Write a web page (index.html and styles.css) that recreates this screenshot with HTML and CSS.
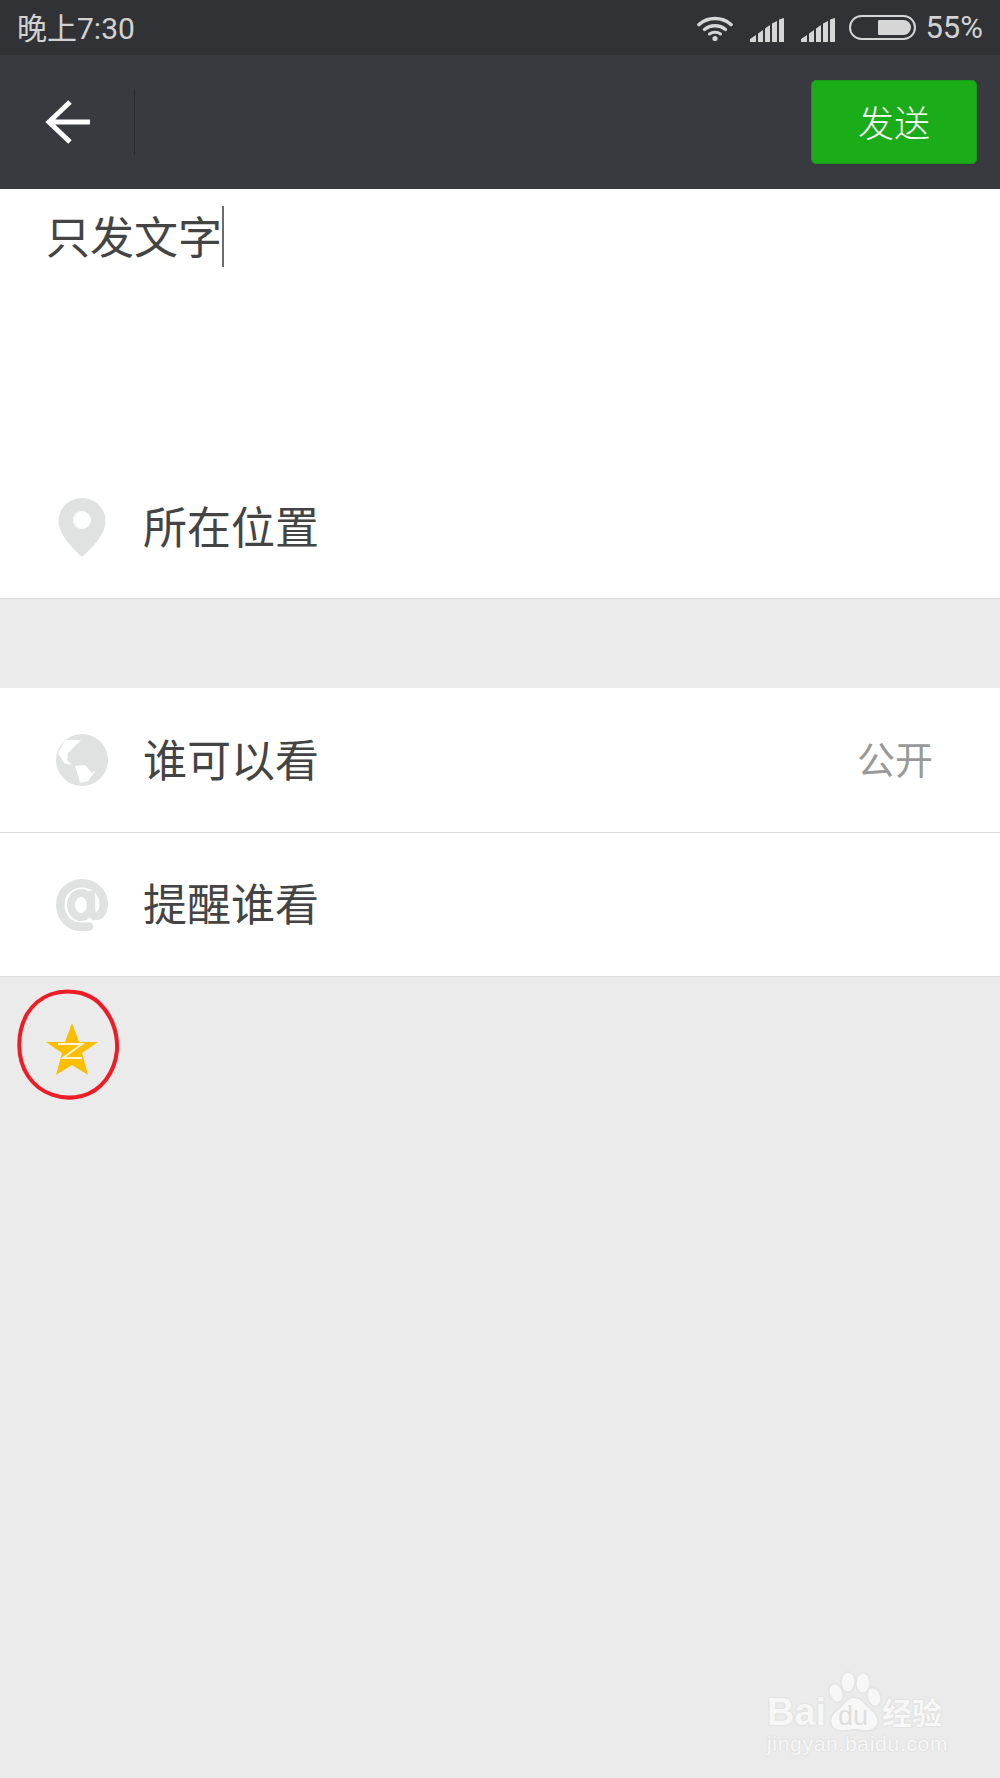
FILE: index.html
```html
<!DOCTYPE html>
<html lang="zh-CN">
<head>
  <meta charset="UTF-8">
  <title>只发文字</title>
  <link rel="stylesheet" href="styles.css">
</head>
<body>
  <div class="status-bar">
    <span class="status-time">晚上7:30</span>
    <div class="status-icons">
      <svg class="icon-wifi" width="36" height="26" viewBox="0 0 36 26">
        <path d="M2 9.500C11 1.500 25 1.500 34 9.500" fill="none" stroke="#d6d6d6" stroke-width="3.600" stroke-linecap="round"/>
        <path d="M7.500 14.500C13.500 9.500 22.500 9.500 28.500 14.500" fill="none" stroke="#d6d6d6" stroke-width="3.400" stroke-linecap="round"/>
        <path d="M12.500 19C15.500 16.800 20.500 16.800 23.500 19" fill="none" stroke="#d6d6d6" stroke-width="3" stroke-linecap="round"/>
        <circle cx="18" cy="23.500" r="2.600" fill="#d6d6d6"/>
      </svg>
      <svg class="icon-signal" width="35" height="24" viewBox="0 0 35 24">
        <path d="M0 24V21L6 17V24ZM8 24V15.500L13 12V24ZM15 24V10.500L20 7V24ZM22 24V5.500L27 3V24ZM29 24V1.500L34 0V24Z" fill="#d6d6d6"/>
      </svg>
      <svg class="icon-signal" width="35" height="24" viewBox="0 0 35 24">
        <path d="M0 24V21L6 17V24ZM8 24V15.500L13 12V24ZM15 24V10.500L20 7V24ZM22 24V5.500L27 3V24ZM29 24V1.500L34 0V24Z" fill="#d6d6d6"/>
      </svg>
      <div class="battery"><div class="battery-fill"></div></div>
      <span class="status-percent">55%</span>
    </div>
  </div>

  <div class="top-bar">
    <svg class="icon-back" width="46" height="46" viewBox="0 0 46 46">
      <path d="M45 23H4M25 3L4 23L25 43" fill="none" stroke="#fff" stroke-width="5"/>
    </svg>
    <div class="top-divider"></div>
    <div class="send-btn">发送</div>
  </div>

  <div class="compose">
    <span class="compose-text">只发文字</span><span class="caret"></span>
  </div>

  <div class="row row-location">
    <svg class="row-icon" width="50" height="60" viewBox="0 0 50 60">
      <path d="M25 1C11.500 1 1.500 11.500 1.500 24C1.500 37 14 50 25 60C36 50 48.500 37 48.500 24C48.500 11.500 38.500 1 25 1Z" fill="#e0e2e2"/>
      <circle cx="25" cy="23" r="9" fill="#fff"/>
    </svg>
    <span class="row-label">所在位置</span>
  </div>

  <div class="section-gap"></div>

  <div class="row row-who">
    <svg class="row-icon" width="52" height="52" viewBox="0 0 52 52">
      <circle cx="26" cy="26" r="26" fill="#e0e2e2"/>
      <path d="M2 19L9 6L25 6L17 14L12 19L11 26L16 31L8 29Z" fill="#fff"/>
      <path d="M19 32L29 31L36 39L40 36L32 47L24 49L22 41Z" fill="#fff"/>
    </svg>
    <span class="row-label">谁可以看</span>
    <span class="row-value">公开</span>
  </div>

  <div class="row">
    <svg class="row-icon" width="52" height="52" viewBox="0 0 52 52">
      <path d="M33 47.500C30.500 47.800 28 48 26 48C13 48 4.300 38 4.300 26C4.300 13 14 4.300 26 4.300C38 4.300 47.700 13 47.700 25C47.700 33 44 37 40 37C37 37 35 35 35 32V16" fill="none" stroke="#e0e2e2" stroke-width="8.500" stroke-linecap="round"/>
      <ellipse cx="25" cy="26" rx="10" ry="12" fill="none" stroke="#e0e2e2" stroke-width="8"/>
    </svg>
    <span class="row-label">提醒谁看</span>
  </div>

  <div class="qzone-wrap">
    <svg class="icon-qzone" width="52" height="52" viewBox="0 0 52 52">
      <path d="M26 0L33 19H52L36 30L42 52L26 42L10 52L16 30L0 19H19Z" fill="#fdbe00"/>
      <path d="M12 21H36L17 35H36" fill="none" stroke="#fff6d8" stroke-width="2"/>
    </svg>
    <svg class="mark-circle" width="106" height="114" viewBox="0 0 106 114">
      <path d="M66 5C44 0 24 7 12 26C2 44 1 70 13 88C25 106 47 113 67 108C86 103 100 85 102 62C103 42 95 25 83 14C78 9 72 7 66 5Z" fill="none" stroke="#ee1c25" stroke-width="4"/>
    </svg>
  </div>

  <div class="watermark">
    <div class="wm-top">
      <span class="wm-bai">Bai</span>
      <svg class="wm-paw" width="54" height="60" viewBox="0 0 54 60">
        <ellipse cx="20" cy="10" rx="6.500" ry="9.500" fill="#f7f7f7"/>
        <ellipse cx="35" cy="11" rx="6.500" ry="9.500" fill="#f7f7f7"/>
        <ellipse cx="8" cy="21" rx="6" ry="9" transform="rotate(-20 8 21)" fill="#f7f7f7"/>
        <ellipse cx="46" cy="25" rx="6" ry="9" transform="rotate(-20 46 25)" fill="#f7f7f7"/>
        <path d="M26 26C18 26 16 34 9 39C0 45 2 57 12 58C18 59 22 57 26 57C31 57 35 59 41 58C51 57 52 46 44 39C37 34 34 26 26 26Z" fill="#f7f7f7"/>
      </svg>
      <span class="wm-du">du</span>
      <span class="wm-jy">经验</span>
    </div>
    <div class="wm-url">jingyan.baidu.com</div>
  </div>
</body>
</html>
```

FILE: styles.css
```css
*{
  margin: 0;
  padding: 0;
  box-sizing: border-box;
}
body{
  width: 1000px;
  height: 1778px;
  position: relative;
  overflow: hidden;
  background: #ebebeb;
  font-family: "Liberation Sans", "Noto Sans CJK SC", sans-serif;
  color: #444;
}

/* status bar */
.status-bar{
  height: 55px;
  background: #313236;
  display: flex;
  justify-content: space-between;
  align-items: center;
  padding: 0 17px 0 17px;
  color: #d2d2d2;
  font-size: 30px;
  font-family: Roboto, "Noto Sans CJK SC", sans-serif;
}
.status-time{
  margin-bottom: 3px;
}
.status-percent{
  margin-bottom: 1px;
  font-size: 31px;
}
.status-icons{
  display: flex;
  align-items: center;
}
.icon-wifi{
  margin-right: 17px;
}
.icon-signal{
  margin-right: 16px;
  margin-top: 4px;
}
.battery{
  width: 67px;
  height: 25px;
  margin-left: -3px;
  margin-right: 9px;
  border: 2px solid #d6d6d6;
  border-radius: 13px;
  padding: 3px;
  display: flex;
  justify-content: flex-end;
}
.battery-fill{
  width: 33px;
  background: #d6d6d6;
  border-radius: 1px 8px 8px 1px;
}

/* header */
.top-bar{
  height: 134px;
  background: #393a3f;
  display: flex;
  align-items: center;
  padding: 0 23px 0 45px;
}
.icon-back{
  margin-top: -1px;
}
.top-divider{
  width: 1px;
  height: 66px;
  margin-left: 43px;
  margin-top: -1px;
  background: #2a2b2f;
}
.send-btn{
  margin-left: auto;
  margin-top: -1px;
  width: 166px;
  height: 84px;
  padding-bottom: 2px;
  border-radius: 5px;
  border: 1px solid #179b16;
  background: #1aad19;
  color: #fff;
  font-size: 36px;
  font-weight: 300;
  font-family: "Noto Sans CJK SC", sans-serif;
  display: flex;
  align-items: center;
  justify-content: center;
}

/* text area */
.compose{
  height: 281px;
  background: #fff;
  padding: 17px 0 0 46px;
  display: flex;
  align-items: flex-start;
  font-family: "Noto Sans CJK SC", sans-serif;
}
.compose-text{
  font-size: 44px;
  line-height: 58px;
}
.caret{
  width: 2px;
  height: 61px;
  background: #6f6a6c;
}

/* rows */
.row{
  height: 144px;
  background: #fff;
  border-bottom: 1px solid #dcdcdc;
  display: flex;
  align-items: center;
  padding: 0 67px 0 0;
}
.row-location{
  height: 129px;
  padding-bottom: 15px;
}
.row-location .row-label{
  margin-bottom: 3px;
}
.row-who{
  height: 145px;
}
.row-icon{
  margin-left: 56px;
  width: 52px;
  flex-shrink: 0;
}
.row-label{
  margin-left: 35px;
  margin-bottom: 5px;
  font-size: 44px;
  font-family: "Noto Sans CJK SC", sans-serif;
}
.row-value{
  margin-left: auto;
  margin-bottom: 5px;
  font-size: 38px;
  color: #999;
  font-family: "Noto Sans CJK SC", sans-serif;
}
.section-gap{
  height: 89px;
}

/* qzone toggle */
.qzone-wrap{
  position: relative;
  padding: 46px 0 0 46px;
}
.icon-qzone{
  display: block;
}
.mark-circle{
  position: absolute;
  left: 15px;
  top: 11px;
}

/* baidu watermark */
.watermark{
  position: absolute;
  left: 767px;
  top: 1672px;
  width: 180px;
  color: #f7f7f7;
  text-shadow: 0 0 2px #cfcfcf;
}
.wm-top{
  height: 59px;
  display: flex;
  align-items: flex-end;
  position: relative;
}
.wm-bai{
  font-size: 38px;
  line-height: 38px;
  font-weight: 700;
}
.wm-paw{
  position: absolute;
  left: 61px;
  top: 0;
  filter: drop-shadow(0 0 1px #cfcfcf);
}
.wm-du{
  position: absolute;
  left: 71px;
  top: 29px;
  font-size: 27px;
  line-height: 30px;
  color: #dedede;
  text-shadow: none;
}
.wm-jy{
  position: absolute;
  left: 115px;
  top: 20px;
  font-size: 30px;
  line-height: 38px;
  font-weight: 700;
  font-family: "Noto Sans CJK SC", sans-serif;
  white-space: nowrap;
}
.wm-url{
  margin-top: 1px;
  font-size: 21px;
  line-height: 24px;
  letter-spacing: .7px;
  white-space: nowrap;
}
```
